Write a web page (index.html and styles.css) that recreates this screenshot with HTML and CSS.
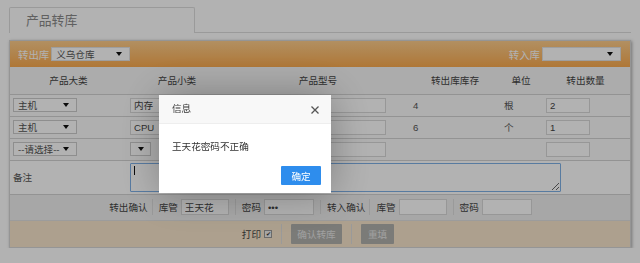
FILE: index.html
```html
<!DOCTYPE html>
<html lang="zh-CN">
<head>
  <meta charset="UTF-8" />
  <title>产品转库</title>
  <link rel="stylesheet" href="styles.css">
</head>
<body>

  <div class="page">
    <!-- tab -->
    <div class="tabs">
      <div class="tab">产品转库</div>
    </div>

    <div class="panel">
      <div class="panel-head">
        <label class="store">转出库
          <span class="sel sel-store"><select><option>义乌仓库</option></select></span>
        </label>
        <label class="store">转入库
          <span class="sel sel-store"><select><option></option></select></span>
        </label>
      </div>

      <table class="items">
        <colgroup>
          <col class="c1"><col class="c2"><col class="c3"><col class="c4"><col class="c5"><col class="c6">
        </colgroup>
        <thead>
          <tr>
            <th>产品大类</th><th>产品小类</th><th>产品型号</th><th>转出库库存</th><th>单位</th><th>转出数量</th>
          </tr>
        </thead>
        <tbody>
          <tr>
            <td><span class="sel sel-cat"><select><option>主机</option></select></span></td>
            <td><input class="txt txt-sub" value="内存"></td>
            <td><input class="txt txt-model"></td>
            <td class="num">4</td>
            <td>根</td>
            <td><input class="txt txt-qty" value="2"></td>
          </tr>
          <tr>
            <td><span class="sel sel-cat"><select><option>主机</option></select></span></td>
            <td><input class="txt txt-sub" value="CPU"></td>
            <td><input class="txt txt-model"></td>
            <td class="num">6</td>
            <td>个</td>
            <td><input class="txt txt-qty" value="1"></td>
          </tr>
          <tr>
            <td><span class="sel sel-cat"><select><option>--请选择--</option></select></span></td>
            <td><span class="sel sel-small"><select><option></option></select></span></td>
            <td><input class="txt txt-model"></td>
            <td></td>
            <td></td>
            <td><input class="txt txt-qty"></td>
          </tr>
          <tr class="remark">
            <td>备注</td>
            <td colspan="5">
              <div class="memo"><textarea></textarea><span class="caret"></span></div>
            </td>
          </tr>
        </tbody>
      </table>

      <div class="confirm">
        <span class="grp title">转出确认</span>
        <span class="grp">库管 <input class="txt txt-sign" value="王天花"></span>
        <span class="grp">密码 <input class="txt txt-sign" type="password" value="123"></span>
        <span class="grp title">转入确认</span>
        <span class="grp">库管 <input class="txt txt-sign"></span>
        <span class="grp">密码 <input class="txt txt-sign" type="password"></span>
      </div>

      <div class="actions">
        <span class="grp print">打印 <span class="check">&#10004;</span></span>
        <span class="grp"><button class="btn btn-wide">确认转库</button></span>
        <span class="grp"><button class="btn">重填</button></span>
      </div>
    </div>
  </div>

  <!-- layer dialog -->
  <div class="shade"></div>
  <div class="dialog">
    <div class="dialog-title">信息
      <svg class="close" width="8" height="8" viewBox="0 0 8 8">
        <path d="M0.5 0.5 L7.5 7.5 M7.5 0.5 L0.5 7.5" stroke="#555" stroke-width="1.3" fill="none"/>
      </svg>
    </div>
    <div class="dialog-body">王天花密码不正确</div>
    <div class="dialog-btns"><button class="btn-ok">确定</button></div>
  </div>

</body>
</html>
```

FILE: styles.css
```css
* {
  box-sizing: border-box;
  padding: 0;
  margin: 0;
  font-family: 'Liberation Sans', 'Noto Sans CJK SC', sans-serif;
}

body {
  background: #fff;
  color: #555;
  font-size: 9.6px;
}

.page {
  padding: 7px 9px 0 9px;
  width: 640px;
}

.tabs {
  border-bottom: 1px solid #ddd;
  height: 26px;
  width: 622px;
}

.tab {
  width: 186px;
  height: 26px;
  border: 1px solid #ddd;
  border-bottom: none;
  border-radius: 2px 2px 0 0;
  padding-left: 16px;
  line-height: 25px;
  font-size: 12.8px;
  color: #8a8a8a;
  background: #fff;
}

.panel {
  margin-top: 7px;
  width: 622px;
  border: 1px solid #d6d6d6;
  box-shadow: 1px 1px 3px rgba(0, 0, 0, 0.35);
}

.panel-head {
  height: 26px;
  display: flex;
  justify-content: space-between;
  align-items: center;
  padding: 0 9px 0 8px;
  background: linear-gradient(to bottom, #ffce8c, #fbab4f);
}

.store {
  color: #fff;
  font-size: 10.4px;
  display: flex;
  align-items: center;
  gap: 2px;
}

/* select with custom arrow */
.sel {
  position: relative;
  display: inline-block;
}

.sel select {
  appearance: none;
  -webkit-appearance: none;
  display: block;
  width: 100%;
  height: 14px;
  border: 1px solid #ccc;
  background: #fff;
  color: #555;
  font-size: 9.6px;
  padding: 0 0 0 4px;
  outline: none;
}

.sel::after {
  content: "";
  position: absolute;
  right: 8px;
  top: 5px;
  border-left: 3px solid transparent;
  border-right: 3px solid transparent;
  border-top: 4px solid #111;
}

.sel-store {
  width: 79px;
}

.sel-store select {
  border-color: #e2e2e2;
}

.sel-cat {
  width: 64px;
}

.sel-small {
  width: 21px;
}

.sel-small::after {
  right: 7px;
}

.items {
  width: 100%;
  border-collapse: collapse;
  table-layout: fixed;
}

.c1 { width: 117px; }
.c2 { width: 100px; }
.c3 { width: 182px; }
.c4 { width: 92px; }
.c5 { width: 40px; }
.c6 { width: 89px; }

.items th {
  height: 27px;
  font-weight: normal;
  color: #444;
  font-size: 9.6px;
  background: #f6f6f6;
}

.items td {
  height: 22px;
  border-top: 1px solid #d3d3d3;
  padding: 0 3px;
  background: #fbfbfb;
  color: #555;
}

.items td.num {
  padding-left: 4px;
}

.items tr.remark td {
  height: 34px;
  border-bottom: 1px solid #d3d3d3;
  background: #fff;
}

.txt {
  display: block;
  height: 15px;
  border: 1px solid #d9d9d9;
  background: #fff;
  color: #444;
  font-size: 9.6px;
  padding: 0 3px;
  outline: none;
}

.txt-sub { width: 98px; }
.txt-model { width: 155px; margin-left: 1px; }
.txt-qty { width: 44px; margin-left: 2px; }

.memo {
  position: relative;
  width: 431px;
}

.memo textarea {
  display: block;
  width: 431px;
  height: 29px;
  border: 1px solid #7fb0e6;
  border-radius: 1px;
  outline: none;
  background: #fff;
}

.caret {
  position: absolute;
  left: 4px;
  top: 3px;
  width: 1px;
  height: 9px;
  background: #111;
}

.confirm {
  height: 26px;
  display: flex;
  justify-content: center;
  align-items: center;
  background: #f0f0f0;
  border-bottom: 1px solid #e0e0e0;
  color: #444;
  padding-left: 1px;
}

.grp {
  display: flex;
  align-items: center;
  gap: 3px;
  padding: 0 6px;
  border-left: 1px solid #ddd;
}

.grp:first-child {
  border-left: none;
}

.confirm .title {
  padding-right: 4px;
}

.txt-sign {
  width: 48px;
  height: 16px;
}

.confirm .grp:nth-child(3) .txt-sign,
.confirm .grp:nth-child(6) .txt-sign {
  width: 50px;
}

.actions {
  height: 26px;
  display: flex;
  justify-content: center;
  align-items: center;
  background: #f8e6cc;
  padding-right: 4px;
}

.actions .grp {
  padding: 0 9px;
}

.print {
  color: #444;
}

.check {
  width: 8px;
  height: 8px;
  border: 1px solid #999;
  background: #eee;
  color: #333;
  font-size: 6px;
  line-height: 6px;
  text-align: center;
}

.btn {
  height: 20px;
  padding: 0 7px;
  border: none;
  border-radius: 1px;
  background: #b0b0ac;
  color: #e6e6e6;
  font-size: 9.6px;
  white-space: nowrap;
}

.btn-wide {
  width: 51px;
  padding: 0 6px;
}

/* layer */
.shade {
  position: fixed;
  left: 0;
  top: 0;
  right: 0;
  bottom: 0;
  background: rgba(0, 0, 0, 0.3);
}

.dialog {
  position: fixed;
  left: 159px;
  top: 95px;
  width: 172px;
  height: 98px;
  background: #fff;
  box-shadow: 1px 1px 40px rgba(0, 0, 0, 0.3);
}

.dialog-title {
  height: 29px;
  line-height: 28px;
  padding-left: 13px;
  background: #f8f8f8;
  border-bottom: 1px solid #eee;
  color: #333;
  font-size: 9.6px;
  position: relative;
}

.close {
  position: absolute;
  right: 12px;
  top: 11px;
}

.dialog-body {
  padding: 15px 13px 0;
  height: 42px;
  color: #333;
  font-size: 9.6px;
}

.dialog-btns {
  display: flex;
  justify-content: flex-end;
  padding-right: 10px;
}

.btn-ok {
  width: 40px;
  height: 19px;
  border: none;
  border-radius: 1px;
  background: #2e8ded;
  color: #fff;
  font-size: 9.6px;
}
```
